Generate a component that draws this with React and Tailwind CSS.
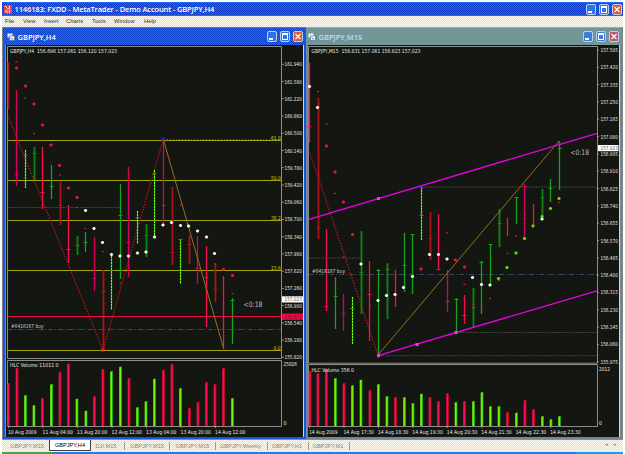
import React from 'react'
import { clsx } from 'clsx'

const FONT = "font-['DejaVu_Sans_Condensed','DejaVu_Sans',sans-serif]"

const COLORS = {
  r: '#f5104c',
  d: '#a81418',
  m: '#d8005c',
  g: '#12a41c',
  k: '#088a10',
  b: '#1c9c10'
}

// [x, high, low, close, color]
const H4_BARS = [
  [8, 62, 109, 0, 'd'], [16.5, 90, 186, 174, 'm'], [25.5, 150, 188, 155, 'b'], [34, 147, 180, 153, 'k'],
  [42.5, 147, 209, 192, 'r'], [51, 165, 199, 186, 'g'], [60, 182, 225, 205, 'd'], [68.5, 205, 263, 249, 'r'],
  [77, 236, 255, 245, 'k'], [85.5, 232, 252, 242, 'g'], [94.5, 237, 291, 278, 'm'], [103, 270, 350, 291, 'd'],
  [111.5, 256, 310, 270, 'b'], [120, 184, 279, 215, 'g'], [128.5, 167, 277, 242, 'm'], [137.5, 211, 244, 217, 'b'],
  [146, 224, 257, 235, 'k'], [154.5, 170, 237, 173, 'b'], [163.5, 141, 225, 205, 'm'], [172, 187, 265, 252, 'd'],
  [180.5, 239, 284, 239, 'b'], [189, 235, 264, 244, 'd'], [197.5, 236, 284, 268, 'm'], [206.5, 246, 327, 277, 'r'],
  [215, 263, 302, 289, 'd'], [223.5, 276, 349, 316, 'r'], [232.5, 298, 344, 300, 'g']
]

const M15_BARS = [
  [309.5, 63, 143, 126, 'r'], [318, 98, 239, 227, 'd'], [326.5, 229, 311, 306, 'r'], [335.5, 277, 329, 296, 'g'],
  [343.5, 294, 331, 313, 'm'], [352.5, 297, 344, 308, 'b'], [361, 231, 314, 272, 'k'], [369.5, 261, 341, 294, 'r'],
  [378.5, 269, 355, 270, 'g'], [387, 263, 319, 269, 'k'], [395.5, 270, 307, 294, 'r'], [404, 233, 292, 265, 'g'],
  [412.5, 234, 294, 234, 'g'], [421.5, 187, 240, 215, 'b'], [430, 212, 260, 238, 'd'], [438.5, 214, 270, 269, 'r'],
  [447.5, 270, 312, 301, 'm'], [456, 298, 332, 299, 'g'], [464.5, 295, 324, 315, 'r'], [473, 288, 327, 307, 'k'],
  [481.5, 261, 314, 262, 'g'], [490.5, 244, 284, 244, 'g'], [499, 209, 247, 223, 'k'], [507.5, 218, 236, 0, 'r'],
  [516.5, 197, 224, 197, 'g'], [524.5, 184, 238, 186, 'm'], [533.5, 204, 226, 0, 'r'], [542, 189, 220, 197, 'k'],
  [550.5, 179, 202, 188, 'g'], [559.5, 141, 190, 148, 'g']
]

// [x, y] of the indicator dots
const H4_RED = [[16.5, 68], [25.5, 86], [34, 104], [42.5, 125], [51, 145], [59.5, 165.5], [68.5, 188], [77, 197.5], [223.5, 269.5], [232.5, 275.5]]
const H4_SMALL = [[16.5, 62], [25, 98], [34, 133.5], [60, 175], [77, 207.5], [85.5, 228.5], [103, 251.5], [120.5, 283], [181, 205], [215, 264], [232.5, 293.5]]
const H4_WHITE = [
  [85.5, 210.5], [94, 228.5], [102.5, 242.5], [111.5, 254.5], [120, 256], [128.5, 256], [137.5, 253], [146, 252],
  [154.5, 237], [163, 225], [171.5, 222.5], [180.5, 225.5], [188.5, 226], [197.5, 231], [206.5, 237], [214.5, 253.5]
]
const M15_RED = [[326.5, 146], [335, 172], [343.5, 202], [352.5, 234.5], [455.5, 260], [464.5, 267], [421, 269]]
const M15_SMALL = [
  [318, 91.5], [326.5, 124], [335, 193.5], [343.5, 257], [447, 233], [464.5, 284.5], [490, 298.5], [473, 304.5],
  [481.5, 308.5], [507.5, 253.5], [516, 236], [525, 214], [524.5, 219], [499, 280.5], [559, 202.5], [542, 211], [370, 305]
]
const M15_WHITE = [
  [309.5, 86.5], [317.5, 107.5], [361, 264], [378, 300.5], [386.5, 295.5], [395, 294.5], [403.5, 287.5], [412.5, 276.5],
  [429.5, 254.5], [438.5, 254.5], [447, 259], [472.5, 277.5], [481.5, 284.5], [490, 285], [542, 219]
]
const M15_GREEN = [[498.5, 278.5], [507, 267.5], [516, 253], [524.5, 238.5], [533, 226], [542, 216.5], [550.5, 208.5], [559, 198.5]]

// [x, top, color]
const H4_VOLUME = [
  [8.5, 383, 'r'], [17, 368, 'r'], [25.5, 395, 'b'], [34, 405, 'b'], [42.5, 398, 'r'], [51.5, 384, 'b'], [60, 372, 'r'],
  [68.5, 363.5, 'r'], [77, 398.5, 'b'], [86, 410.5, 'b'], [94.5, 396, 'r'], [103, 369, 'r'], [111.5, 371, 'b'],
  [120.5, 366.5, 'b'], [129, 378, 'r'], [137.5, 407, 'b'], [146, 401, 'b'], [154.5, 378.5, 'b'], [163.5, 370, 'r'],
  [172, 364, 'r'], [180.5, 388, 'b'], [189.5, 408, 'r'], [198, 402, 'r'], [206.5, 382, 'r'], [215, 384, 'r'],
  [223.5, 368, 'r'], [232.5, 398, 'b']
]
const M15_VOLUME = [
  [310, 371, 'r'], [318, 373, 'r'], [326.5, 369, 'r'], [335.5, 378, 'b'], [344, 383, 'r'], [352.5, 385, 'b'],
  [361, 379.5, 'b'], [370, 390, 'r'], [378.5, 384, 'b'], [387, 396, 'b'], [395.5, 397, 'r'], [404.5, 397, 'b'],
  [413, 403, 'b'], [421.5, 393.5, 'b'], [430, 397, 'r'], [438.5, 401, 'r'], [447.5, 393, 'r'], [456, 402, 'b'],
  [464.5, 401, 'r'], [473.5, 401, 'b'], [482, 392, 'b'], [490.5, 406, 'b'], [499, 406, 'b'], [507.5, 412, 'r'],
  [516.5, 412.5, 'b'], [525, 400, 'r'], [533.5, 409, 'r'], [542.5, 416, 'b'], [551, 419, 'b'], [559.5, 416, 'b']
]

const H4_TIMES = ['10 Aug 2009', '11 Aug 04:00', '11 Aug 20:00', '12 Aug 12:00', '13 Aug 04:00', '13 Aug 20:00', '14 Aug 12:00']
const M15_TIMES = ['14 Aug 2009', '14 Aug 17:30', '14 Aug 18:30', '14 Aug 19:30', '14 Aug 20:30', '14 Aug 21:30', '14 Aug 22:30', '14 Aug 23:30']

const FIBS = [['61.8', 140.5], ['50.0', 180.5], ['38.2', 220.5], ['23.6', 270.5], ['0.0', 350.5]]

const Label = ({ x, y, w, fill = '#e8e8e4', size = 5.5, children }) => (
  <text x={x} y={y} fill={fill} fontSize={size} textLength={w} lengthAdjust="spacingAndGlyphs">{children}</text>
)

const PriceBars = ({ bars }) => bars.map(([x, high, low, close, c]) => {
  const mid = Math.floor(x) + 0.5
  return (
    <g key={x} stroke={COLORS[c]}>
      <line x1={mid} x2={mid} y1={high} y2={low} strokeWidth={c === 'd' || c === 'k' ? 1.8 : 1.3} />
      {c === 'b' && <line x1={mid} x2={mid} y1={high} y2={low} stroke="#7cff10" strokeWidth="1" strokeDasharray="2 1" />}
      {close > 0 && <line x1={mid - 2} x2={mid + 2} y1={close + 0.5} y2={close + 0.5} strokeWidth="1" />}
    </g>
  )
})

const Dots = ({ points, color, small = false }) => points.map(([x, y]) => (
  small
    ? <rect key={`${x}-${y}`} x={x - 1} y={y - 0.7} width="2" height="1.4" fill={color} />
    : <path key={`${x}-${y}`} d={`M${x - 1.6} ${y}h3.2M${x} ${y - 1.6}v3.2`} stroke={color} strokeWidth="1.7" />
))

const Volume = ({ bars }) => bars.map(([x, top, c]) => (
  <g key={x}>
    <rect x={x - 0.5} y={top} width="2" height={426 - top} fill={c === 'r' ? '#a00c18' : '#089018'} />
    <rect x={x - 1.3} y={top + 0.5} width="2" height={425.5 - top} fill={c === 'r' ? '#fb0c4e' : '#74f400'} />
  </g>
))

const PriceScale = ({ axis, x, from, step, count, top, gap }) => (
  Array.from({ length: count }, (_, i) => (
    <g key={i}>
      <line x1={axis} x2={axis + 2} y1={top + i * gap} y2={top + i * gap} stroke="#aaa" strokeWidth="0.8" />
      <Label x={x} y={top + i * gap + 2} w={17.4}>{(from - i * step).toFixed(3)}</Label>
    </g>
  ))
)

const TimeScale = ({ labels, x, gap }) => labels.map((label, i) => (
  <g key={label}>
    <line x1={x + i * gap + 0.5} x2={x + i * gap + 0.5} y1="426" y2="428" stroke="#aaa" strokeWidth="0.8" />
    <Label x={x + i * gap} y={433.7} w={i === 0 ? 28.5 : 30.5}>{label}</Label>
  </g>
))

const H4Chart = () => (
  <svg viewBox="6 45 297 392" className={clsx('block h-[392px] w-[297px] overflow-visible bg-[#141711]', FONT)}>
    <g fill="none" stroke="#8c8c8c" strokeWidth="1">
      <path d="M7.5 358.5V46.5H281.5V358.5Z" />
      <path d="M7.5 426.5V360.5H281.5V426.5Z" />
    </g>
    <line x1="8" x2="120" y1="207.5" y2="207.5" stroke="#5a5f58" strokeWidth="0.8" strokeDasharray="1.2 1.2" />
    {FIBS.map(([label, y]) => (
      <g key={label}>
        <line x1="8" x2="281" y1={y} y2={y} stroke="#a4a40c" strokeWidth="1" />
        <Label x={label === '0.0' ? 273.5 : 271} y={y - 1} w={label === '0.0' ? 7 : 9.8} fill="#d0d004">{label}</Label>
      </g>
    ))}
    <line x1="164" x2="281" y1="139.8" y2="139.8" stroke="#aaa890" strokeWidth="0.7" strokeDasharray="1 2" />
    <line x1="8" x2="281" y1="329.5" y2="329.5" stroke="#385068" strokeWidth="0.9" strokeDasharray="5 2 1 2" />
    <path d="M8 116L103 350L163 140" fill="none" stroke="#d01616" strokeWidth="1.1" strokeDasharray="1.4 1.4" />
    <PriceBars bars={H4_BARS} />
    <line x1="8" x2="282" y1="316.5" y2="316.5" stroke="#f20a46" strokeWidth="1.2" />
    <line x1="163.5" x2="223.5" y1="140" y2="348" stroke="#94701e" strokeWidth="1" />
    <Dots points={H4_RED} color="#f5104c" />
    <Dots points={H4_SMALL} color="#d01030" small />
    <Dots points={H4_WHITE} color="#ffffff" />
    <rect x="161.5" y="137.5" width="3.2" height="3" fill="#1428e0" />
    <rect x="101.3" y="348.5" width="3.2" height="3" fill="#ff2030" />
    <Label x={10} y={53} w={107}>GBPJPY,H4&#160; 156.698 157.061 156.120 157.023</Label>
    <Label x={11} y={328.3} w={32.5} fill="#c8ccc8">#6416167 buy</Label>
    <Label x={243.5} y={306.8} w={19} fill="#b0bcc8" size={7.5}>&lt;0:18</Label>
    <PriceScale axis={282} x={284.5} from={161.94} step={0.36} count={18} top={64.3} gap={17.24} />
    <rect x="282" y="296.3" width="21" height="6.2" fill="#fff" />
    <Label x={284.5} y={301.4} w={17.4} fill="#555">157.023</Label>
    <rect x="282" y="313.6" width="21" height="6.2" fill="#f20a46" />
    <Label x={284.5} y={318.7} w={17.4} fill="#6a1020">156.670</Label>
    <Volume bars={H4_VOLUME} />
    <Label x={10} y={367.3} w={48.5}>HLC Volume 11011 0</Label>
    <Label x={283.5} y={366.2} w={13.5}>25826</Label>
    <Label x={283.5} y={425.2} w={3}>0</Label>
    <TimeScale labels={H4_TIMES} x={8} gap={34.5} />
  </svg>
)

const M15Chart = () => (
  <svg viewBox="308 45 311 392" className={clsx('block h-[392px] w-[311px] overflow-visible bg-[#141711]', FONT)}>
    <g fill="none" stroke="#8c8c8c" strokeWidth="1">
      <path d="M308.5 363.2V46.5H597.5V363.2Z" />
      <path d="M308.5 426.5V364.5H597.5V426.5Z" />
    </g>
    <g stroke="#62665e" strokeWidth="0.8" strokeDasharray="1.2 1.2">
      <line x1="421" x2="597" y1="187" y2="187" />
      <line x1="309" x2="361" y1="258" y2="258" />
      <line x1="456" x2="597" y1="332.5" y2="332.5" />
      <line x1="378" x2="597" y1="355.7" y2="355.7" />
    </g>
    <line x1="309" x2="597" y1="274.5" y2="274.5" stroke="#385068" strokeWidth="0.9" strokeDasharray="5 2 1 2" />
    <path d="M309 150L378 355" fill="none" stroke="#d01616" strokeWidth="1.1" strokeDasharray="1.4 1.4" />
    <PriceBars bars={M15_BARS} />
    <line x1="378" x2="559" y1="355" y2="141" stroke="#94701e" strokeWidth="1" />
    <line x1="309" x2="597" y1="219.3" y2="133.3" stroke="#e800e8" strokeWidth="1.4" />
    <line x1="378" x2="597" y1="355.6" y2="290.8" stroke="#e800e8" strokeWidth="1.4" />
    <Dots points={M15_RED} color="#f5104c" />
    <Dots points={M15_SMALL} color="#d01030" small />
    <Dots points={M15_WHITE} color="#ffffff" />
    <Dots points={M15_GREEN} color="#5ee808" />
    <g fill="#ff30f0">
      <rect x="377" y="197" width="3" height="3" />
      <rect x="377" y="354" width="3" height="3.2" />
      <rect x="415.5" y="343" width="3" height="3" />
      <rect x="454.5" y="331" width="3" height="3" />
    </g>
    <rect x="420" y="185.3" width="2.8" height="2.8" fill="#4a28ff" />
    <Label x={311.5} y={53} w={109}>GBPJPY,M15&#160; 156.831 157.061 156.823 157.023</Label>
    <Label x={312} y={273.2} w={33} fill="#c8ccc8">#6416167 buy</Label>
    <Label x={570.5} y={155.2} w={18.5} fill="#b0bcc8" size={7.5}>&lt;0:18</Label>
    <PriceScale axis={597} x={600.5} from={157.505} step={0.085} count={19} top={50} gap={17.32} />
    <rect x="598" y="145" width="20.5" height="6.2" fill="#fff" />
    <Label x={600.5} y={150.2} w={17.4} fill="#555">157.023</Label>
    <Volume bars={M15_VOLUME} />
    <Label x={311.5} y={372.3} w={42.5}>HLC Volume 356 0</Label>
    <Label x={599} y={370.7} w={11}>2012</Label>
    <Label x={599} y={425.2} w={3}>0</Label>
    <TimeScale labels={M15_TIMES} x={309} gap={34.45} />
  </svg>
)

const WindowButtons = ({ faded = false }) => {
  const base = 'h-[11px] w-[10px] rounded-[2px] border border-[#b8d0ee]'
  const blue = faded ? 'bg-[#3d7fd6]' : 'bg-[#2b74ea]'
  return (
    <div className="flex gap-[3px]">
      <div className={clsx(base, blue, 'flex items-end p-px')}><div className="h-[2px] w-[4px] bg-white" /></div>
      <div className={clsx(base, blue, 'p-px')}><div className="h-full w-full border border-t-2 border-white" /></div>
      <div className={clsx(base, faded ? 'bg-[#b8586a]' : 'bg-[#dd5930]')}>
        <svg viewBox="0 0 8 9" className="block h-full w-full" stroke="#fff" strokeWidth="1.3"><path d="M1.5 2l5 5M6.5 2l-5 5" /></svg>
      </div>
    </div>
  )
}

const ChartIcon = () => (
  <svg viewBox="0 0 8 8" className="h-[8px] w-[8px] shrink-0">
    <rect x="0.5" y="0.5" width="5" height="4" fill="#eef4ff" />
    <rect x="2.5" y="3" width="5" height="4.5" fill="#fff" stroke="#3c66a0" strokeWidth="0.6" />
    <path d="M3.5 5h1v1h2" stroke="#3c66a0" strokeWidth="0.7" fill="none" />
  </svg>
)

const MENU = [
  ['File', 'w-[18px]'],
  ['View', 'w-[21px]'],
  ['Insert', 'w-[22px]'],
  ['Charts', 'w-[26px]'],
  ['Tools', 'w-[22px]'],
  ['Window', 'w-[30px]'],
  ['Help', 'w-[20px]']
]

const TABS = [
  ['GBPJPY,M15', 'w-[47px] pl-[3px]'],
  ['GBPJPY,H4', 'w-[42px]'],
  ['DJI,M15', 'w-[34px] pr-[3px]'],
  ['GBPJPY,M15', 'w-[45px]'],
  ['GBPJPY,M15', 'w-[46px]'],
  ['GBPJPY,Weekly', 'w-[52px] pr-[2px]'],
  ['GBPJPY,H1', 'w-[41px] pr-[2px]'],
  ['GBPJPY,M1', 'w-[41px] pr-[2px]']
]

const App = () => {
  return (
    <div className={clsx('flex h-[454px] w-[625px] flex-col overflow-hidden bg-white pt-[2px] pr-[2px] pl-[2px]', FONT)}>
      {/* Title bar */}
      <div className="flex h-[14px] shrink-0 items-center border-y border-[#1a6cf4] bg-[repeating-conic-gradient(#0a38c4_0_25%,#1b6ef4_0_50%)] bg-[length:2px_2px] pr-px pl-[2px]">
        <svg viewBox="0 0 8 9" className="h-[9px] w-[8px] shrink-0">
          <rect width="8" height="9" fill="#e84050" />
          <path d="M1 1l2 2M5 1l1 3M1 6h2v2M6 5l-1 3M3 4h2" stroke="#ffe8e8" strokeWidth="1" fill="none" />
        </svg>
        <div className="ml-[2.5px] flex-1 font-['Open_Sans',sans-serif] text-[7.5px] leading-[12px] font-semibold tracking-[-0.13px] whitespace-pre text-white">
          1146183: FXDD - MetaTrader - Demo Account - GBPJPY,H4
        </div>
        <WindowButtons />
      </div>

      {/* Menu */}
      <div className="flex h-[11px] shrink-0 items-center bg-[repeating-conic-gradient(#ecdcc6_0_25%,#fffaf0_0_50%)] bg-[length:2px_2px] pl-[3px] font-['Liberation_Sans',sans-serif] text-[5.8px] leading-none text-[#333]">
        {MENU.map(([item, width]) => <span key={item} className={width}>{item}</span>)}
      </div>

      {/* Chart windows */}
      <div className="flex h-[412px] shrink-0 bg-[#808080] pl-px">
        <div className="w-[303px] shrink-0 bg-[#1456dc]">
          <div className="flex h-[18px] items-center border-t border-[#2a7cf8] bg-[repeating-conic-gradient(#0a42cc_0_25%,#1b6ef4_0_50%)] bg-[length:2px_2px] pr-[3px] pl-[4px]">
            <ChartIcon />
            <div className="ml-[2.5px] flex-1 font-['Open_Sans',sans-serif] text-[7.5px] leading-[12px] font-semibold text-white">GBPJPY,H4</div>
            <WindowButtons />
          </div>
          <div className="flex h-[392px] pl-[2px]">
            <div className="w-px bg-[#8c8c90]" />
            <H4Chart />
            <div className="w-px bg-[#c8d4f0]" />
          </div>
        </div>
        <div className="w-[316px] shrink-0 bg-[#6f8798]">
          <div className="flex h-[18px] items-center border-t border-[#8fb0b8] bg-[repeating-conic-gradient(#6a8ea6_0_25%,#789c9c_0_50%)] bg-[length:2px_2px] pr-[3px] pl-[2px]">
            <ChartIcon />
            <div className="ml-[2.5px] flex-1 font-['Open_Sans',sans-serif] text-[7.5px] leading-[12px] font-semibold text-[#c4dcf8]">GBPJPY,M15</div>
            <WindowButtons faded />
          </div>
          <div className="flex h-[392px] pl-[2px]">
            <M15Chart />
            <div className="w-px bg-[#d8d8cc]" />
          </div>
        </div>
      </div>

      {/* Chart tabs */}
      <div className="flex h-[13px] shrink-0 border-t border-[#909090] bg-[repeating-conic-gradient(#ecdcc6_0_25%,#fffaf0_0_50%)] bg-[length:2px_2px] font-['Liberation_Sans',sans-serif] text-[5.6px] leading-[9px] text-[#8c8478]">
        {TABS.map(([label, width], i) => (
          <div
            key={i}
            className={clsx(
              'flex shrink-0 items-center justify-center whitespace-nowrap',
              width,
              i === 1 ? 'h-[11px] border border-t-0 border-[#404040] bg-white text-black' : 'mt-[2px] h-[8px]',
              i > 1 && 'border-r border-[#a09888]',
            )}
          >
            {label}
          </div>
        ))}
        <div className="flex-1" />
        <div className="flex gap-[6px] pr-[6px] text-[5px]"><span>◂</span><span>▸</span></div>
      </div>

      {/* Taskbar edge */}
      <div className="flex h-[2px] shrink-0">
        <div className="w-[51px] bg-[#48a048]" />
        <div className="flex-1 bg-[#2a78ee]" />
        <div className="w-[47px] bg-[#12a0ee]" />
      </div>
    </div>
  )
}

export default App
